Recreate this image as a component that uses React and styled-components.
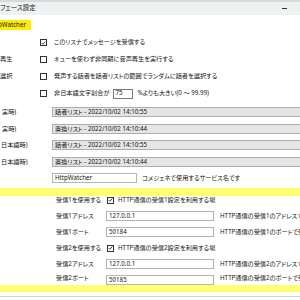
import React from "react";
import styled, { createGlobalStyle } from "styled-components";

const GlobalStyle = createGlobalStyle`
  html, body {
    margin: 0;
    padding: 0;
    background: #fff;
  }
  body {
    font-family: "Noto Sans", "Noto Sans CJK JP", sans-serif;
    font-feature-settings: "palt";
    color: #141414;
  }
`;

const Window = styled.div`
  width: 300px;
  height: 300px;
  overflow: hidden;
  background: #fff;
  display: flex;
  flex-direction: column;
  font-size: 6.2px;
  line-height: 1;
`;

const TopStrip = styled.div`
  height: 2px;
  flex-shrink: 0;
  background: #dadada;
`;

const TitleBar = styled.div`
  height: 13px;
  flex-shrink: 0;
  background: #eef2f2;
  display: flex;
  align-items: center;
  justify-content: space-between;
  padding-right: 13px;
  font-size: 6.5px;
`;

const Minimize = styled.span`
  width: 5px;
  height: 1px;
  background: #333;
`;

const Body = styled.div`
  display: flex;
  flex-direction: column;
  padding-top: 5px;
`;

const Highlight = styled.div`
  align-self: flex-start;
  width: 31px;
  height: 10px;
  box-sizing: border-box;
  padding-right: 5px;
  background: #ffec00;
  display: flex;
  align-items: center;
  justify-content: flex-end;
  overflow: hidden;
  white-space: nowrap;
  margin-bottom: 4px;
`;

const Band = styled.div`
  height: ${({ $h }) => $h}px;
  flex-shrink: 0;
  background: #ffff74;
  margin-top: ${({ $mt }) => $mt || 0}px;
`;

const Row = styled.div`
  height: ${({ $h }) => $h || 17}px;
  flex-shrink: 0;
  box-sizing: border-box;
  display: flex;
  align-items: ${({ $top }) => ($top ? "flex-start" : "center")};
  padding-top: ${({ $top }) => $top || 0}px;
  white-space: nowrap;
  overflow: hidden;
  padding-left: ${({ $indent }) => $indent || 0}px;
  margin-top: ${({ $mt }) => $mt || 0}px;
`;

const Label = styled.span`
  width: ${({ $w }) => $w}px;
  flex-shrink: 0;
  box-sizing: border-box;
  padding-left: ${({ $pl }) => $pl || 0}px;
  overflow: hidden;
`;

const Box = styled.span`
  width: 7px;
  height: 7px;
  box-sizing: border-box;
  border: 1px solid #333;
  background: #fff;
  flex-shrink: 0;
  display: inline-flex;
  align-items: center;
  justify-content: center;
  margin-right: ${({ $mr }) => $mr}px;
`;

const Select = styled.div`
  flex: 1;
  height: 10px;
  box-sizing: border-box;
  margin-right: -6px;
  padding-left: 2px;
  background: #e5e5e5;
  border: 1px solid #adadad;
  display: flex;
  align-items: center;
`;

const Field = styled.div`
  width: ${({ $w }) => $w}px;
  height: 10px;
  box-sizing: border-box;
  flex-shrink: 0;
  padding-left: 2px;
  background: #fff;
  border: 1px solid ${({ $dark }) => ($dark ? "#7a7a7a" : "#b4b4b4")};
  display: flex;
  align-items: center;
  margin: 0 ${({ $mr }) => $mr || 0}px 0 ${({ $ml }) => $ml || 0}px;
`;

const Lower = styled.div`
  display: flex;
  flex-direction: column;
`;

const Footer = styled.div`
  height: 4px;
  flex-shrink: 0;
  border-bottom: 1px solid #d4d4d4;
`;

function Checkbox({ checked, mr }) {
  return (
    <Box $mr={mr}>
      {checked && (
        <svg width="6" height="6" viewBox="0 0 6 6">
          <path d="M0.8 3.1 L2.3 4.6 L5.2 1.2" fill="none" stroke="#222" strokeWidth="1" />
        </svg>
      )}
    </Box>
  );
}

export default function App() {
  return (
    <>
      <GlobalStyle />
      <Window>
        <TopStrip />
        <TitleBar>
          <span>フェース設定</span>
          <Minimize />
        </TitleBar>
        <Body>
          <Highlight>HttpWatcher</Highlight>

          <Row>
            <Label $w={40} />
            <Checkbox checked mr={7} />
            このリスナでメッセージを受信する
          </Row>
          <Row>
            <Label $w={40}>再生</Label>
            <Checkbox mr={7} />
            キューを使わず非同期に音声再生を実行する
          </Row>
          <Row>
            <Label $w={40}>選択</Label>
            <Checkbox mr={7} />
            発声する話者を話者リストの範囲でランダムに話者を選択する
          </Row>
          <Row>
            <Label $w={40} />
            <Checkbox mr={7} />
            非日本語文字割合が
            <Field $w={20} $ml={3} $mr={5} $dark>
              75
            </Field>
            %よりも大きい(0 ～ 99.99)
          </Row>

          <Row $h={16.5} $mt={2}>
            <Label $w={52} $pl={2}>実時)</Label>
            <Select>話者リスト - 2022/10/02 14:10:55</Select>
          </Row>
          <Row $h={16.5}>
            <Label $w={52} $pl={2}>実時)</Label>
            <Select>置換リスト - 2022/10/02 14:10:44</Select>
          </Row>
          <Row $h={16.5}>
            <Label $w={52} $pl={1}>日本語時)</Label>
            <Select>話者リスト - 2022/10/02 14:10:55</Select>
          </Row>
          <Row $h={16.5}>
            <Label $w={52} $pl={1}>日本語時)</Label>
            <Select>置換リスト - 2022/10/02 14:10:44</Select>
          </Row>
          <Row $h={16.5}>
            <Label $w={52} />
            <Field $w={85} $mr={5}>
              HttpWatcher
            </Field>
            コメジェネで使用するサービス名です
          </Row>

          <Band $h={8} $mt={1.5} />

          <Lower>
            <Row $h={8} $indent={56}>
              <Label $w={51}>受信1を使用する</Label>
              <Checkbox checked mr={4} />
              HTTP通信の受信1設定を利用する場
            </Row>
            <Row $h={16} $indent={56} $mt={4}>
              <Label $w={50}>受信1アドレス</Label>
              <Field $w={108} $mr={6}>
                127.0.0.1
              </Field>
              HTTP通信の受信1のアドレスで受信します
            </Row>
            <Row $h={16} $indent={56}>
              <Label $w={50}>受信1ポート</Label>
              <Field $w={108} $mr={6}>
                50184
              </Field>
              HTTP通信の受信1のポートで受信します
            </Row>
            <Row $h={16} $indent={56}>
              <Label $w={51}>受信2を使用する</Label>
              <Checkbox checked mr={4} />
              HTTP通信の受信2設定を利用する場
            </Row>
            <Row $h={16} $indent={56}>
              <Label $w={50}>受信2アドレス</Label>
              <Field $w={108} $mr={6}>
                127.0.0.1
              </Field>
              HTTP通信の受信2のアドレスで受信します
            </Row>
            <Row $h={13} $indent={56} $top={3}>
              <Label $w={50}>受信2ポート</Label>
              <Field $w={108} $mr={6}>
                50185
              </Field>
              HTTP通信の受信2のポートで受信します
            </Row>
          </Lower>

          <Band $h={7} />
          <Footer />
        </Body>
      </Window>
    </>
  );
}
